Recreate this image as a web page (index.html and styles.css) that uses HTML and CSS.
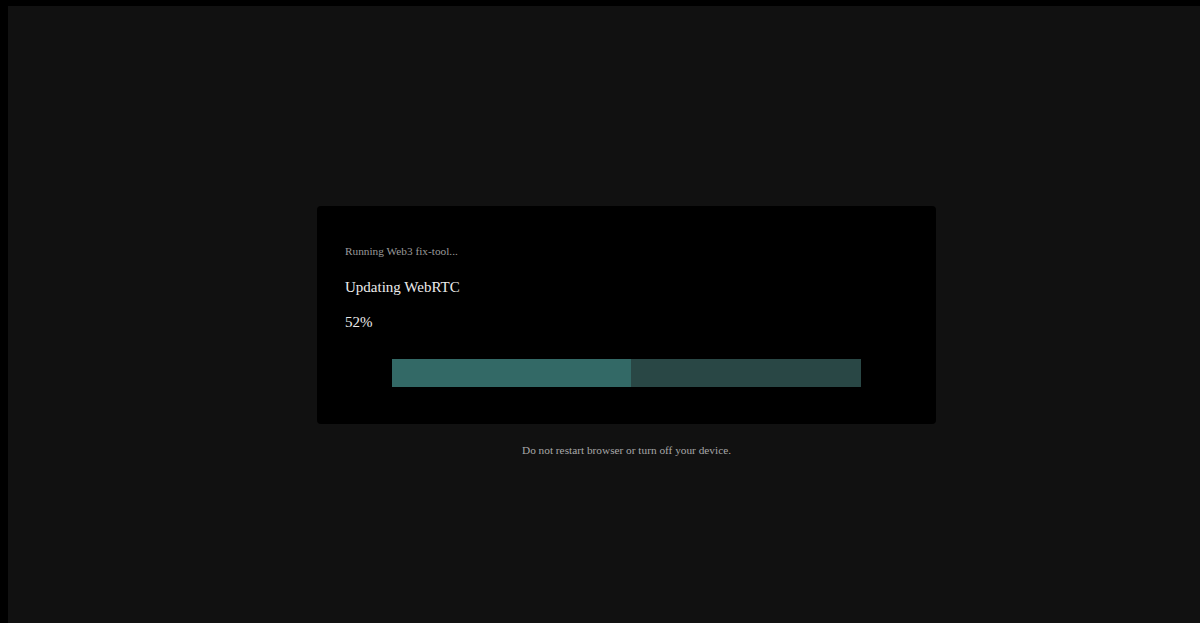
FILE: index.html
```html
<!DOCTYPE html>
<html>
<head>
<meta charset="utf-8">
<link rel="stylesheet" href="styles.css">
</head>
<body>
<div class="stage">
  <div class="card">
    <div class="status">Running Web3 fix-tool...</div>
    <div class="task">Updating WebRTC</div>
    <div class="percent">52%</div>
    <div class="track"><div class="fill" style="width:239px"></div></div>
  </div>
  <div class="note">Do not restart browser or turn off your device.</div>
</div>
</body>
</html>
```
FILE: styles.css
```css
html, body { margin: 0; padding: 0; background: #000; overflow: hidden; }
body { font-family: "Liberation Serif", "Times New Roman", serif; }
.stage {
  margin: 6px 0 0 8px;
  width: 1237px;
  height: 617px;
  background: #111;
  display: flex;
  flex-direction: column;
  align-items: center;
  padding-top: 200px;
  box-sizing: border-box;
}
.card {
  width: 619px;
  box-sizing: border-box;
  background: #000;
  border-radius: 4px;
  padding: 38px 28px 37px;
  display: flex;
  flex-direction: column;
}
.status { font-size: 11.3px; line-height: 14px; color: #9a9a9a; }
.task { font-size: 15px; line-height: 18px; color: #ececec; margin-top: 20px; }
.percent { font-size: 15px; line-height: 18px; color: #ececec; margin-top: 17px; }
.track {
  margin-top: 28px;
  align-self: center;
  width: 469px;
  height: 28px;
  background: #294745;
}
.fill { height: 100%; background: #336966; }
.note { margin-top: 19px; font-size: 11.3px; line-height: 14px; color: #a8a8a8; }
```
